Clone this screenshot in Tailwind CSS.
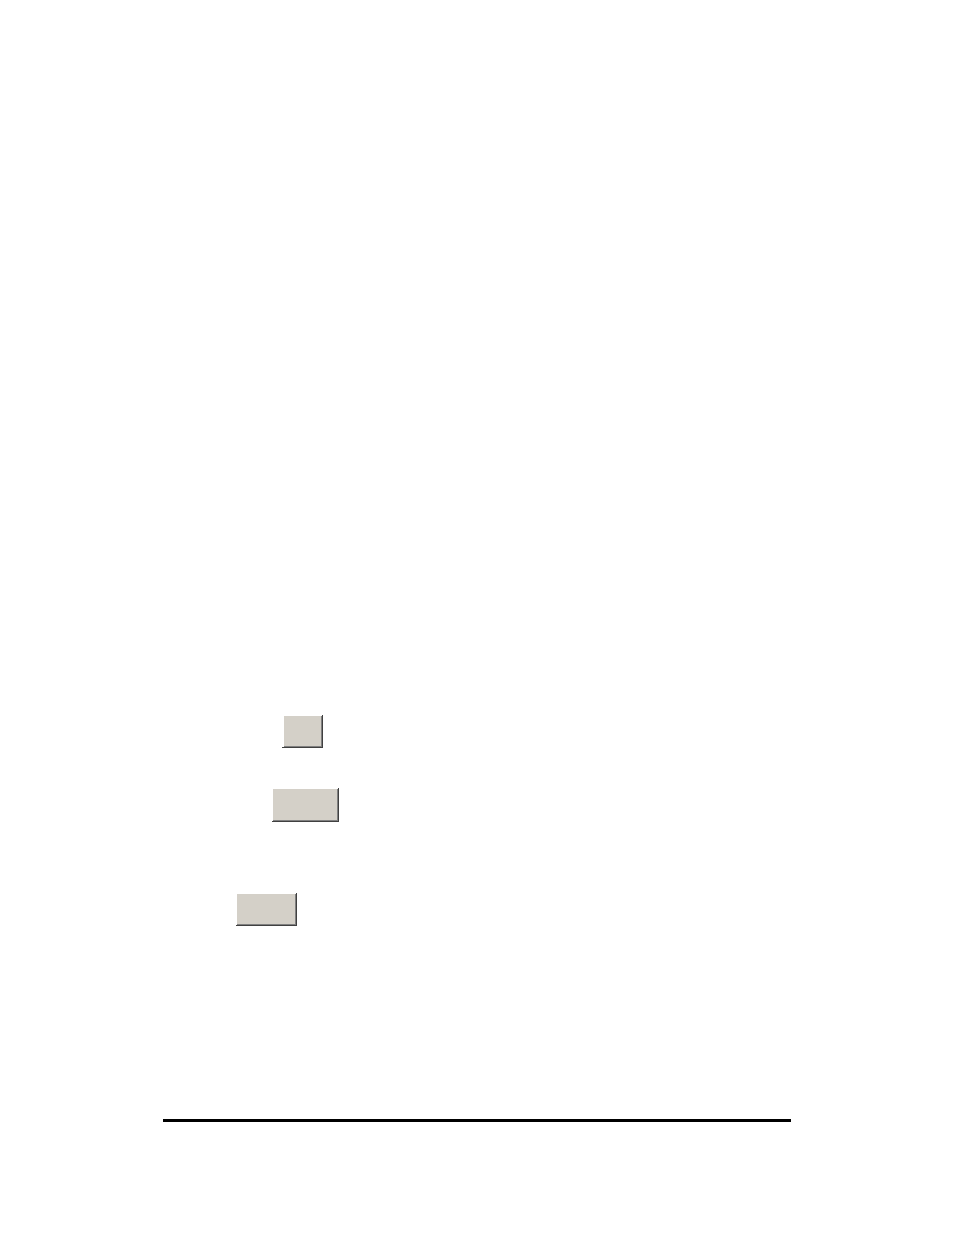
<!DOCTYPE html>
<html lang="en">
<head>
  <meta charset="UTF-8">
  <meta name="viewport" content="width=device-width, initial-scale=1.0">
  <title>Manual Page</title>
  <script src="https://cdn.jsdelivr.net/npm/@tailwindcss/browser@4"></script>
</head>
<body class="bg-white">

  <div class="min-h-screen flex flex-col px-[163px] pb-[113px]">
    <!-- Dialog buttons -->
    <main class="flex-1 flex flex-col items-start pt-[715px]">
      <button type="button" aria-label="First button" class="ml-[119px] w-[41px] h-[33px] bg-[#d4d0c8] shadow-[inset_-1px_-1px_#404040,inset_2px_1px_#ffffff,inset_-2px_-2px_#808080]"></button>
      <button type="button" aria-label="Second button" class="mt-10 ml-[109px] w-[67px] h-[34px] bg-[#d4d0c8] shadow-[inset_-1px_-1px_#404040,inset_1px_1px_#ffffff,inset_-2px_-2px_#808080]"></button>
      <button type="button" aria-label="Third button" class="mt-[71px] ml-[73px] w-[61px] h-[33px] bg-[#d4d0c8] shadow-[inset_-1px_-1px_#404040,inset_1px_1px_#ffffff,inset_-2px_-2px_#808080]"></button>
    </main>

    <!-- Footer rule -->
    <hr class="border-0 h-[3px] bg-black">
  </div>

</body>
</html>
